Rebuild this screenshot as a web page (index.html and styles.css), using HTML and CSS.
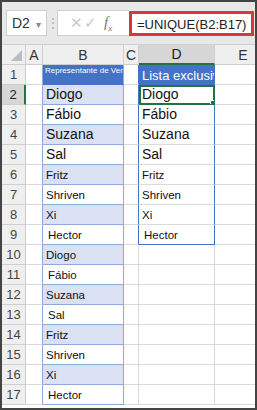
FILE: index.html
```html
<!DOCTYPE html>
<html lang="pt-BR">
<head>
    <meta charset="UTF-8">
    <title>UNIQUE</title>
    <link rel="stylesheet" href="styles.css">
</head>
<body>
    <div class="frame">
        <div class="toolbar">
            <div class="namebox">D2 <span class="caret">&#9662;</span></div>
            <div class="dots">&#8942;</div>
            <div class="fxbox">
                <span class="x">&#10005;</span><span class="ok">&#10003;</span><span class="fx">f<sub>x</sub></span>
            </div>
            <div class="formula">=UNIQUE(B2:B17)</div>
        </div>

        <table class="sheet">
            <colgroup>
                <col class="c-rh"><col class="c-a"><col class="c-b"><col class="c-c"><col class="c-d"><col class="c-e">
            </colgroup>
            <tr class="hdr">
                <th class="corner"><span class="tri"></span></th><th>A</th><th>B</th><th>C</th><th class="sel">D</th><th>E</th>
            </tr>
            <tr>
                <th>1</th><td class="a"></td><td class="b head small">Representante de Vendas</td><td class="c"></td><td class="d head">Lista exclusiva</td><td></td>
            </tr>
            <tr class="big">
                <th class="sel">2</th><td class="a"></td><td class="b alt">Diogo</td><td class="c"></td><td class="d active">Diogo<span class="handle"></span></td><td></td>
            </tr>
            <tr class="big">
                <th>3</th><td class="a"></td><td class="b">Fábio</td><td class="c"></td><td class="d">Fábio</td><td></td>
            </tr>
            <tr class="big">
                <th>4</th><td class="a"></td><td class="b alt">Suzana</td><td class="c"></td><td class="d">Suzana</td><td></td>
            </tr>
            <tr class="big">
                <th>5</th><td class="a"></td><td class="b">Sal</td><td class="c"></td><td class="d">Sal</td><td></td>
            </tr>
            <tr>
                <th>6</th><td class="a"></td><td class="b alt">Fritz</td><td class="c"></td><td class="d">Fritz</td><td></td>
            </tr>
            <tr>
                <th>7</th><td class="a"></td><td class="b">Shriven</td><td class="c"></td><td class="d">Shriven</td><td></td>
            </tr>
            <tr>
                <th>8</th><td class="a"></td><td class="b alt">Xi</td><td class="c"></td><td class="d">Xi</td><td></td>
            </tr>
            <tr>
                <th>9</th><td class="a"></td><td class="b in">Hector</td><td class="c"></td><td class="d last in">Hector</td><td></td>
            </tr>
            <tr>
                <th>10</th><td class="a"></td><td class="b alt">Diogo</td><td></td><td></td><td></td>
            </tr>
            <tr>
                <th>11</th><td class="a"></td><td class="b in">Fábio</td><td></td><td></td><td></td>
            </tr>
            <tr>
                <th>12</th><td class="a"></td><td class="b alt">Suzana</td><td></td><td></td><td></td>
            </tr>
            <tr>
                <th>13</th><td class="a"></td><td class="b in">Sal</td><td></td><td></td><td></td>
            </tr>
            <tr>
                <th>14</th><td class="a"></td><td class="b alt">Fritz</td><td></td><td></td><td></td>
            </tr>
            <tr>
                <th>15</th><td class="a"></td><td class="b">Shriven</td><td></td><td></td><td></td>
            </tr>
            <tr>
                <th>16</th><td class="a"></td><td class="b alt">Xi</td><td></td><td></td><td></td>
            </tr>
            <tr>
                <th>17</th><td class="a"></td><td class="b in">Hector</td><td></td><td></td><td></td>
            </tr>
        </table>
    </div>
</body>
</html>
```

FILE: styles.css
```css
:root {
    --grid: #d9d9d9;
    --head-bg: #efefef;
    --blue: #4472c4;
    --blue-line: #8eaadb;
    --blue-fill: #d9e1f2;
    --green: #217346;
}

* {
    box-sizing: border-box;
}

body {
    margin: 0;
    font-family: 'Liberation Sans', Arial, sans-serif;
}

.frame {
    width: 257px;
    height: 410px;
    border: 2px solid #444;
    background: white;
    overflow: hidden;
}

/* formula bar */
.toolbar {
    display: flex;
    align-items: center;
    height: 43px;
    padding: 0 1px 0 4px;
    background: #e8e8e8;
    border-bottom: 1px solid #d0d0d0;
}

.namebox {
    width: 41px;
    height: 26px;
    background: white;
    border: 1px solid #cfcfcf;
    font-size: 14px;
    color: #333;
    padding: 4px 0 0 5px;
}

.caret {
    font-size: 10px;
    color: #888;
    margin-left: 2px;
}

.dots {
    width: 10px;
    text-align: center;
    color: #aaa;
    font-size: 12px;
}

.fxbox {
    width: 72px;
    height: 26px;
    background: white;
    border: 1px solid #cfcfcf;
    border-right: none;
    display: flex;
    align-items: center;
    padding-left: 12px;
    color: #c8c8c8;
    font-size: 15px;
}

.fxbox .ok {
    margin-left: 1px;
}

.fx {
    font-family: 'Liberation Serif', serif;
    font-style: italic;
    color: #777;
    font-size: 15px;
    margin-left: 7px;
}

.fx sub {
    font-size: 9px;
}

.formula {
    flex: 1;
    height: 25px;
    border: 3px solid #d9383a;
    background: white;
    font-size: 13px;
    color: #222;
    padding: 3px 0 0 5px;
    white-space: nowrap;
    overflow: hidden;
}

/* grid */
.sheet {
    border-collapse: separate;
    border-spacing: 0;
    table-layout: fixed;
    width: 270px;
}

.c-rh { width: 24px; }
.c-a { width: 17px; }
.c-b { width: 81px; }
.c-c { width: 15px; }
.c-d { width: 76px; }
.c-e { width: 57px; }

.sheet th,
.sheet td {
    height: 20px;
    padding: 0;
    border-right: 1px solid var(--grid);
    border-bottom: 1px solid var(--grid);
    white-space: nowrap;
    overflow: hidden;
    vertical-align: bottom;
}

.sheet th {
    background: var(--head-bg);
    font-weight: normal;
    color: #444;
    font-size: 13px;
    text-align: center;
    vertical-align: middle;
    border-color: #cfcfcf;
}

.hdr th {
    font-size: 14px;
    color: #333;
}

.sheet th.sel {
    background: #d6d6d6;
    color: #222;
}

.hdr th.sel {
    border-bottom: 2px solid var(--green);
}

tr th.sel:first-child {
    border-right: 2px solid var(--green);
}

.corner {
    position: relative;
}

.tri {
    position: absolute;
    right: 3px;
    bottom: 3px;
    border-left: 11px solid transparent;
    border-bottom: 11px solid #bdbdbd;
}

.sheet td {
    font-size: 11.5px;
    color: #111;
    padding: 0 0 3px 3px;
}

.big td {
    font-size: 14px;
    padding-bottom: 2px;
}

.sheet td.a {
    border-right-color: var(--blue-line);
}

.sheet td.b {
    border-right-color: var(--blue-line);
    border-bottom-color: var(--blue-line);
}

.b.alt {
    background: var(--blue-fill);
}

.sheet td.c {
    border-right-color: var(--blue);
}

.sheet td.d {
    border-right-color: var(--blue);
    border-bottom-color: #dcdcdc;
}

.sheet td.d.last {
    border-bottom-color: var(--blue);
}

.sheet td.head {
    background: var(--blue);
    color: white;
    border-bottom-color: var(--blue);
}

.head.small {
    font-size: 8px;
    padding: 0 0 9px 2px;
}

.d.head {
    font-size: 13px;
    padding-bottom: 1px;
}

.sheet td.in {
    padding-left: 5px;
}

.sheet td.active {
    position: relative;
    outline: 2px solid var(--green);
    outline-offset: -2px;
}

.handle {
    position: absolute;
    right: -1px;
    bottom: -1px;
    width: 5px;
    height: 5px;
    background: var(--green);
    border: 1px solid white;
}
```
